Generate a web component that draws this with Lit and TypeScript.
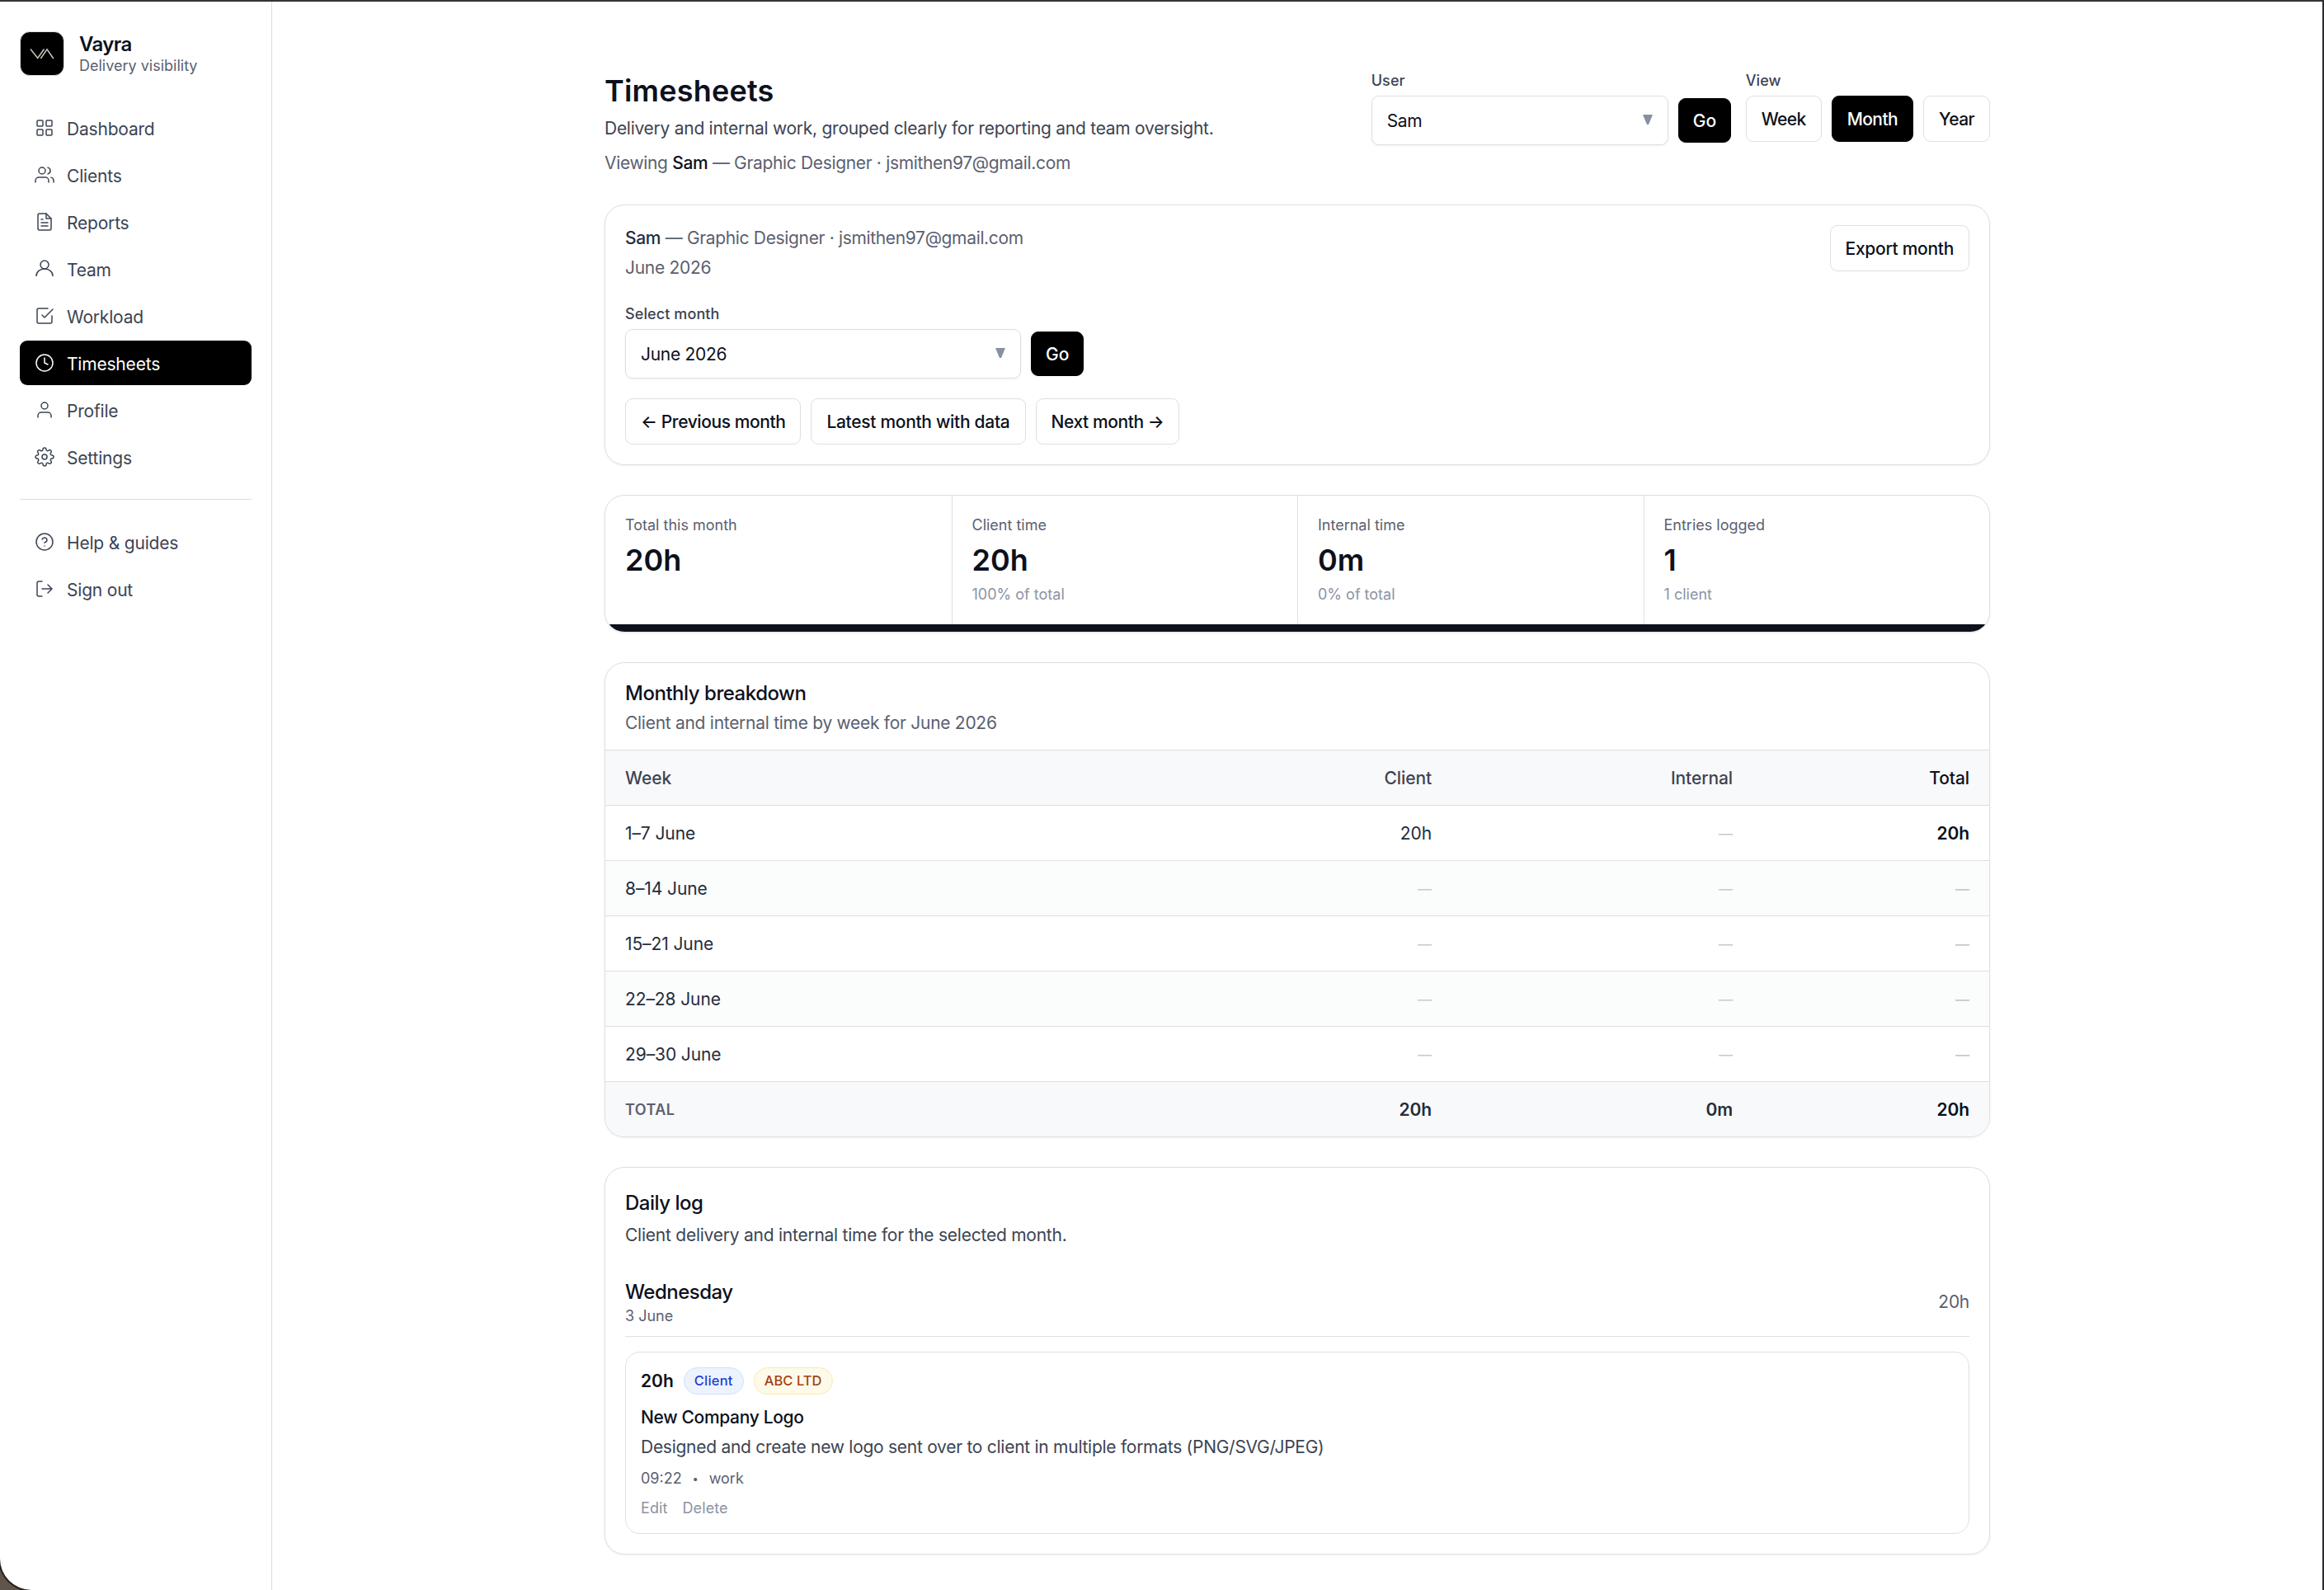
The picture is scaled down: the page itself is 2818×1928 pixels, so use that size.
import { LitElement, html, css, svg, nothing } from 'lit';
import { customElement, property, state } from 'lit/decorators.js';
import { classMap } from 'lit/directives/class-map.js';

const icons = {
  dashboard: svg`
    <rect x="3" y="3" width="7" height="7" rx="1"/>
    <rect x="14" y="3" width="7" height="7" rx="1"/>
    <rect x="3" y="14" width="7" height="7" rx="1"/>
    <rect x="14" y="14" width="7" height="7" rx="1"/>`,
  clients: svg`
    <path d="M17 21v-2a4 4 0 0 0-4-4H5a4 4 0 0 0-4 4v2"/>
    <circle cx="9" cy="7" r="4"/>
    <path d="M23 21v-2a4 4 0 0 0-3-3.87M16 3.13a4 4 0 0 1 0 7.75"/>`,
  reports: svg`
    <path d="M14 2H6a2 2 0 0 0-2 2v16a2 2 0 0 0 2 2h12a2 2 0 0 0 2-2V8z"/>
    <path d="M14 2v6h6M16 13H8M16 17H8M10 9H8"/>`,
  team: svg`
    <circle cx="12" cy="7" r="5"/>
    <path d="M2 20.5c0-5 4.5-8.5 10-8.5s10 3.5 10 8.5"/>`,
  workload: svg`
    <path d="M9 11l3 3L22 4"/>
    <path d="M21 12v7a2 2 0 0 1-2 2H5a2 2 0 0 1-2-2V5a2 2 0 0 1 2-2h11"/>`,
  timesheets: svg`
    <circle cx="12" cy="12" r="10"/>
    <path d="M12 6v6l4 2"/>`,
  profile: svg`
    <path d="M20 21v-2a4 4 0 0 0-4-4H8a4 4 0 0 0-4 4v2"/>
    <circle cx="12" cy="7" r="4"/>`,
  settings: svg`
    <circle cx="12" cy="12" r="3"/>
    <path d="M19.4 15a1.65 1.65 0 0 0 .33 1.82l.06.06a2 2 0 0 1 0 2.83 2 2 0 0 1-2.83 0l-.06-.06a1.65 1.65 0 0 0-1.82-.33 1.65 1.65 0 0 0-1 1.51V21a2 2 0 0 1-2 2 2 2 0 0 1-2-2v-.09A1.65 1.65 0 0 0 9 19.4a1.65 1.65 0 0 0-1.82.33l-.06.06a2 2 0 0 1-2.83 0 2 2 0 0 1 0-2.83l.06-.06a1.65 1.65 0 0 0 .33-1.82 1.65 1.65 0 0 0-1.51-1H3a2 2 0 0 1-2-2 2 2 0 0 1 2-2h.09A1.65 1.65 0 0 0 4.6 9a1.65 1.65 0 0 0-.33-1.82l-.06-.06a2 2 0 0 1 0-2.83 2 2 0 0 1 2.83 0l.06.06a1.65 1.65 0 0 0 1.82.33H9a1.65 1.65 0 0 0 1-1.51V3a2 2 0 0 1 2-2 2 2 0 0 1 2 2v.09a1.65 1.65 0 0 0 1 1.51 1.65 1.65 0 0 0 1.82-.33l.06-.06a2 2 0 0 1 2.83 0 2 2 0 0 1 0 2.83l-.06.06a1.65 1.65 0 0 0-.33 1.82V9a1.65 1.65 0 0 0 1.51 1H21a2 2 0 0 1 2 2 2 2 0 0 1-2 2h-.09a1.65 1.65 0 0 0-1.51 1z"/>`,
  help: svg`
    <circle cx="12" cy="12" r="10"/>
    <path d="M9.09 9a3 3 0 0 1 5.83 1c0 2-3 3-3 3M12 17h.01"/>`,
  signout: svg`
    <path d="M9 21H5a2 2 0 0 1-2-2V5a2 2 0 0 1 2-2h4M16 17l5-5-5-5M21 12H9"/>`,
};

type IconName = keyof typeof icons;

interface NavEntry {
  icon: IconName;
  label: string;
}

const mainNav: NavEntry[] = [
  { icon: 'dashboard', label: 'Dashboard' },
  { icon: 'clients', label: 'Clients' },
  { icon: 'reports', label: 'Reports' },
  { icon: 'team', label: 'Team' },
  { icon: 'workload', label: 'Workload' },
  { icon: 'timesheets', label: 'Timesheets' },
  { icon: 'profile', label: 'Profile' },
  { icon: 'settings', label: 'Settings' },
];

const footNav: NavEntry[] = [
  { icon: 'help', label: 'Help & guides' },
  { icon: 'signout', label: 'Sign out' },
];

const stats = [
  { label: 'Total this month', value: '20h', note: '' },
  { label: 'Client time', value: '20h', note: '100% of total' },
  { label: 'Internal time', value: '0m', note: '0% of total' },
  { label: 'Entries logged', value: '1', note: '1 client' },
];

const weeks = [
  { range: '1–7 June', client: '20h', internal: '—', total: '20h' },
  { range: '8–14 June', client: '—', internal: '—', total: '—' },
  { range: '15–21 June', client: '—', internal: '—', total: '—' },
  { range: '22–28 June', client: '—', internal: '—', total: '—' },
  { range: '29–30 June', client: '—', internal: '—', total: '—' },
];

@customElement('side-nav')
export class SideNav extends LitElement {
  @property() active = '';

  static styles = css`
    :host {
      display: block;
      box-sizing: border-box;
      width: 330px;
      flex: none;
      padding: 36px 24px;
      border-right: 1px solid #dcdee1;
    }
    .brand {
      display: flex;
      gap: 18px;
      height: 54px;
      margin-bottom: 36px;
    }
    .logo {
      box-sizing: border-box;
      width: 54px;
      height: 54px;
      border: 1px solid #dcdfe5;
      border-radius: 12px;
      background: #000;
    }
    .logo svg {
      display: block;
    }
    .name {
      padding-top: 1px;
      font-size: 24px;
      line-height: 29px;
      font-weight: 600;
      letter-spacing: -0.6px;
      color: #0d111c;
    }
    .tagline {
      font-size: 18px;
      line-height: 24px;
      color: #5b5f70;
    }
    nav {
      display: flex;
      flex-direction: column;
      gap: 3px;
    }
    .foot {
      margin-top: 24px;
      padding-top: 24px;
      border-top: 1px solid #dcdee1;
    }
    .item {
      display: flex;
      align-items: center;
      gap: 15px;
      height: 54px;
      padding: 0 18px;
      border-radius: 9px;
      font-size: 21px;
      letter-spacing: -0.2px;
      color: #3c4453;
    }
    .item.active {
      background: #000;
      color: #fff;
    }
    .item span {
      margin-top: 2px;
    }
    .item svg {
      flex: none;
      fill: none;
      stroke: currentColor;
      stroke-width: 1.5;
      stroke-linecap: round;
      stroke-linejoin: round;
    }
  `;

  renderItem(item: NavEntry) {
    return html`
      <div class=${classMap({ item: true, active: item.label === this.active })}>
        <svg width="24" height="24" viewBox="0 0 24 24">${icons[item.icon]}</svg>
        <span>${item.label}</span>
      </div>
    `;
  }

  render() {
    return html`
      <div class="brand">
        <div class="logo">
          <svg width="52" height="52" viewBox="0 0 52 52" fill="none" stroke="#c5c2b4" stroke-width="1.6">
            <path d="M12 20.5L20.7 31.5L28.5 20.5M24.3 32L32 20.8L39.8 32"/>
          </svg>
        </div>
        <div>
          <div class="name">Vayra</div>
          <div class="tagline">Delivery visibility</div>
        </div>
      </div>
      <nav>${mainNav.map((item) => this.renderItem(item))}</nav>
      <nav class="foot">${footNav.map((item) => this.renderItem(item))}</nav>
    `;
  }
}

@customElement('select-box')
export class SelectBox extends LitElement {
  @property() value = '';

  static styles = css`
    :host {
      box-sizing: border-box;
      display: flex;
      align-items: center;
      justify-content: space-between;
      height: 60px;
      padding: 0 18px;
      border: 1px solid #dcdfe5;
      border-radius: 9px;
      background: #fff;
      box-shadow: 0 1px 3px rgba(0, 0, 0, 0.06);
      font-size: 21px;
      letter-spacing: -0.3px;
      color: #0d111c;
    }
    svg {
      margin-bottom: 2px;
      fill: #8790a0;
    }
  `;

  render() {
    return html`
      <span>${this.value}</span>
      <svg width="12" height="12" viewBox="0 0 12 12"><path d="M0 0h12L7 12H5z"/></svg>
    `;
  }
}

@customElement('app-root')
export class AppRoot extends LitElement {
  @state() view = 'Month';

  static styles = css`
    :host {
      display: block;
      height: 1928px;
      overflow: hidden;
      background: #5f554c;
      font-family: Inter, 'Liberation Sans', sans-serif;
      color: #0d111c;
    }
    .window {
      box-sizing: border-box;
      display: flex;
      height: 1928px;
      border-top: 2px solid #333;
      border-right: 2px solid #2c2c2e;
      border-bottom-left-radius: 38px;
      background: #fff;
      box-shadow: 0 0 0 2px #25211e;
    }
    main {
      width: 1680px;
      margin: 0 auto;
      padding-top: 84px;
    }
    h1,
    h2,
    h3,
    p {
      margin: 0;
    }
    strong {
      font-weight: 500;
      color: #0d111c;
    }
    header {
      display: flex;
      justify-content: space-between;
      height: 126px;
      margin-bottom: 36px;
    }
    h1 {
      font-size: 36px;
      line-height: 48px;
      font-weight: 600;
      letter-spacing: 0.2px;
    }
    h2 {
      padding-top: 1px;
      font-size: 24px;
      line-height: 36px;
      font-weight: 500;
      letter-spacing: -0.48px;
    }
    .lead {
      margin-top: 4.5px;
      font-size: 21px;
      line-height: 34.125px;
      letter-spacing: -0.27px;
      color: #3c4453;
    }
    h2 + .lead {
      margin-top: 3.5px;
      letter-spacing: -0.24px;
    }
    .muted {
      font-size: 21px;
      line-height: 30px;
      letter-spacing: -0.28px;
      color: #5b5f70;
    }
    .person {
      letter-spacing: -0.34px;
    }
    .viewing {
      margin-top: 10px;
    }
    .filters {
      display: flex;
      gap: 18px;
    }
    .label {
      margin-bottom: 6px;
      font-size: 18px;
      line-height: 24px;
      font-weight: 500;
      letter-spacing: 0.1px;
      color: #3c4453;
    }
    .row {
      display: flex;
      gap: 12px;
    }
    .pick {
      align-items: center;
    }
    .user-select {
      width: 360px;
    }
    .month-select {
      width: 480px;
    }
    .btn {
      box-sizing: border-box;
      display: flex;
      align-items: center;
      height: 56px;
      padding: 0 18px;
      border: 1px solid #dcdfe5;
      border-radius: 9px;
      background: #fff;
      font-size: 21px;
      font-weight: 500;
      letter-spacing: -0.3px;
      white-space: nowrap;
    }
    .views .btn {
      letter-spacing: -0.6px;
    }
    .btn.arrow {
      letter-spacing: -0.42px;
    }
    .btn.solid {
      border-color: #000;
      background: #000;
      color: #fff;
    }
    .btn.go {
      width: 64px;
      height: 54px;
      padding: 0 17px;
      letter-spacing: 0;
    }
    .card {
      margin-bottom: 36px;
      border: 1px solid #dcdfe5;
      border-radius: 24px;
      background: #fff;
      box-shadow: 0 1px 3px rgba(0, 0, 0, 0.06);
      overflow: hidden;
    }
    .padded {
      padding: 24px;
    }
    .between {
      display: flex;
      justify-content: space-between;
      align-items: flex-start;
    }
    .period {
      height: 96px;
    }
    .period p {
      margin-top: 1px;
    }
    .period p + p {
      margin-top: 6px;
    }
    .period strong {
      color: #252d3c;
    }
    .steps {
      margin-top: 24px;
    }
    .stats {
      display: grid;
      grid-template-columns: repeat(4, 1fr);
    }
    .stat {
      height: 108px;
      padding: 24px;
    }
    .stat + .stat {
      border-left: 1px solid #dcdfe5;
    }
    .stat-label,
    .stat-note {
      font-size: 18px;
      line-height: 24px;
      color: #5b5f70;
    }
    .stat-note {
      color: #8b93a3;
    }
    .stat-value {
      margin: 6px 0;
      font-size: 36px;
      line-height: 48px;
      font-weight: 600;
    }
    .bar {
      height: 9px;
      background: #0d111c;
    }
    .table-head {
      padding: 18px 24px 17px;
    }
    .table-head .muted {
      margin-top: 3px;
    }
    .tr {
      display: grid;
      grid-template-columns: 1fr 365px 365px 287px;
      height: 66px;
      border-top: 1px solid #dcdfe5;
      font-size: 21px;
      line-height: 68px;
      letter-spacing: -0.1px;
      color: #252d3c;
      overflow: hidden;
    }
    .tr span {
      padding: 0 24px;
      text-align: right;
    }
    .tr span:first-child {
      text-align: left;
    }
    .tr.alt {
      background: #fbfcfc;
    }
    .tr.head,
    .tr.sum {
      background: #f8f9fb;
      font-weight: 500;
      color: #3c4453;
    }
    .tr.sum span {
      font-weight: 600;
      color: #252d3c;
    }
    .tr.sum .caption {
      font-size: 18px;
      letter-spacing: 0.45px;
      color: #5b5f70;
    }
    .tr .total,
    .tr.sum .total {
      font-weight: 600;
      color: #0d111c;
    }
    .tr.head .total {
      font-weight: 500;
    }
    .tr .dash {
      font-size: 17px;
      font-weight: 400;
      color: #c6cad2;
    }
    .tr .total.dash {
      font-weight: 600;
    }
    .day {
      display: flex;
      justify-content: space-between;
      align-items: center;
      margin-top: 36px;
      padding-bottom: 12px;
      border-bottom: 1px solid #dcdfe5;
    }
    h3 {
      margin-bottom: 2px;
      font-size: 24px;
      line-height: 31px;
      font-weight: 500;
      letter-spacing: -0.5px;
    }
    .small {
      font-size: 18px;
      line-height: 24px;
      color: #5b5f70;
    }
    .entry {
      margin-top: 18px;
      padding: 18px;
      border: 1px solid #dcdfe5;
      border-radius: 18px;
    }
    .entry-top {
      align-items: center;
      height: 33px;
      font-size: 21px;
      font-weight: 600;
    }
    .chip {
      box-sizing: border-box;
      height: 33px;
      padding: 0 12px;
      border: 1px solid #cfe1fb;
      border-radius: 17px;
      background: #ecf3fe;
      font-size: 16.5px;
      line-height: 31px;
      font-weight: 500;
      letter-spacing: 0.2px;
      color: #1f3fcb;
    }
    .chip.org {
      border-color: #fbeab4;
      background: #fefaea;
      letter-spacing: 0.05px;
      color: #a3420f;
    }
    .entry-title {
      margin-top: 13px;
      font-size: 21px;
      line-height: 30px;
      font-weight: 500;
      letter-spacing: -0.34px;
    }
    .meta {
      display: flex;
      gap: 12px;
      margin-top: 9px;
    }
    .bullet {
      width: 9px;
      font-size: 13px;
      text-align: center;
    }
    .actions {
      display: flex;
      gap: 18px;
      margin-top: 12px;
      letter-spacing: 0.1px;
      color: #8b93a3;
    }
  `;

  renderCell(value: string, cls = '') {
    return html`<span class="${cls} ${value === '—' ? 'dash' : ''}">${value}</span>`;
  }

  renderHeader() {
    return html`
      <header>
        <div>
          <h1>Timesheets</h1>
          <p class="lead">Delivery and internal work, grouped clearly for reporting and team oversight.</p>
          <p class="muted person viewing">Viewing <strong>Sam</strong> — Graphic Designer · jsmithen97@gmail.com</p>
        </div>
        <div class="filters">
          <div>
            <div class="label">User</div>
            <div class="row pick">
              <select-box class="user-select" value="Sam"></select-box>
              <div class="btn solid go">Go</div>
            </div>
          </div>
          <div>
            <div class="label">View</div>
            <div class="row views">
              ${['Week', 'Month', 'Year'].map((name) => html`
                <div class=${classMap({ btn: true, solid: name === this.view })} @click=${() => (this.view = name)}>${name}</div>
              `)}
            </div>
          </div>
        </div>
      </header>
    `;
  }

  renderPeriod() {
    return html`
      <section class="card padded">
        <div class="between period">
          <div>
            <p class="muted person"><strong>Sam</strong> — Graphic Designer · jsmithen97@gmail.com</p>
            <p class="muted">June 2026</p>
          </div>
          <div class="btn">Export month</div>
        </div>
        <div class="label">Select month</div>
        <div class="row pick">
          <select-box class="month-select" value="June 2026"></select-box>
          <div class="btn solid go">Go</div>
        </div>
        <div class="row steps">
          <div class="btn arrow">← Previous month</div>
          <div class="btn">Latest month with data</div>
          <div class="btn arrow">Next month →</div>
        </div>
      </section>
    `;
  }

  renderStats() {
    return html`
      <section class="card">
        <div class="stats">
          ${stats.map((s) => html`
            <div class="stat">
              <div class="stat-label">${s.label}</div>
              <div class="stat-value">${s.value}</div>
              ${s.note ? html`<div class="stat-note">${s.note}</div>` : nothing}
            </div>
          `)}
        </div>
        <div class="bar"></div>
      </section>
    `;
  }

  renderBreakdown() {
    return html`
      <section class="card">
        <div class="table-head">
          <h2>Monthly breakdown</h2>
          <p class="muted">Client and internal time by week for June 2026</p>
        </div>
        <div class="tr head">
          <span>Week</span><span>Client</span><span>Internal</span><span class="total">Total</span>
        </div>
        ${weeks.map((w, i) => html`
          <div class=${classMap({ tr: true, alt: i % 2 === 1 })}>
            <span>${w.range}</span>
            ${this.renderCell(w.client)}
            ${this.renderCell(w.internal)}
            ${this.renderCell(w.total, 'total')}
          </div>
        `)}
        <div class="tr sum">
          <span class="caption">TOTAL</span><span>20h</span><span>0m</span><span class="total">20h</span>
        </div>
      </section>
    `;
  }

  renderLog() {
    return html`
      <section class="card padded">
        <h2>Daily log</h2>
        <p class="lead">Client delivery and internal time for the selected month.</p>
        <div class="day">
          <div>
            <h3>Wednesday</h3>
            <div class="small">3 June</div>
          </div>
          <div class="muted">20h</div>
        </div>
        <div class="entry">
          <div class="row entry-top">
            <span>20h</span>
            <span class="chip">Client</span>
            <span class="chip org">ABC LTD</span>
          </div>
          <div class="entry-title">New Company Logo</div>
          <p class="lead">Designed and create new logo sent over to client in multiple formats (PNG/SVG/JPEG)</p>
          <div class="small meta"><span>09:22</span><span class="bullet">•</span><span>work</span></div>
          <div class="small actions"><span>Edit</span><span>Delete</span></div>
        </div>
      </section>
    `;
  }

  render() {
    return html`
      <div class="window">
        <side-nav active="Timesheets"></side-nav>
        <main>
          ${this.renderHeader()} ${this.renderPeriod()} ${this.renderStats()}
          ${this.renderBreakdown()} ${this.renderLog()}
        </main>
      </div>
    `;
  }
}
